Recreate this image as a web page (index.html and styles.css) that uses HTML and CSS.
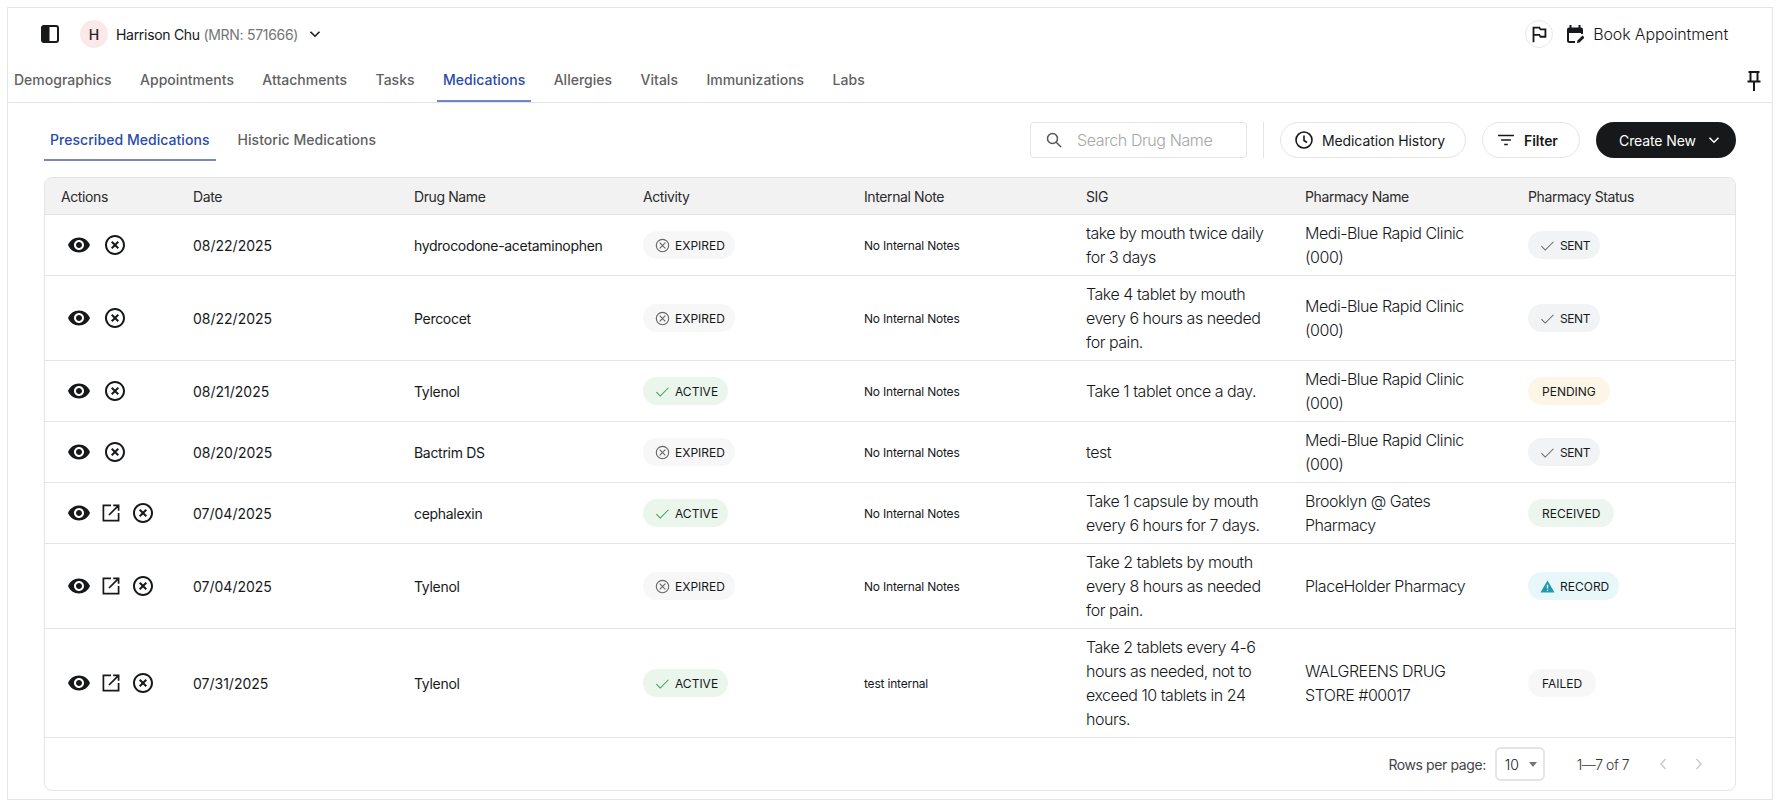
FILE: index.html
```html
<!DOCTYPE html>
<html lang="en">
<head>
<meta charset="utf-8">
<title>Medications</title>
<link rel="stylesheet" href="styles.css">
</head>
<body>
<svg class="defs" width="0" height="0" aria-hidden="true">
  <symbol id="i-eye" viewBox="0 0 24 24"><path d="M12 4.5C7 4.5 2.73 7.61 1 12c1.73 4.39 6 7.5 11 7.5s9.27-3.11 11-7.5c-1.73-4.39-6-7.5-11-7.5zM12 17c-2.76 0-5-2.24-5-5s2.24-5 5-5 5 2.24 5 5-2.24 5-5 5zm0-8c-1.66 0-3 1.34-3 3s1.34 3 3 3 3-1.34 3-3-1.34-3-3-3z"/></symbol>
  <symbol id="i-off" viewBox="0 0 24 24"><path d="M14.59 8 12 10.59 9.41 8 8 9.41 10.59 12 8 14.59 9.41 16 12 13.41 14.59 16 16 14.59 13.41 12 16 9.41 14.59 8zM12 2C6.47 2 2 6.47 2 12s4.47 10 10 10 10-4.47 10-10S17.53 2 12 2zm0 18c-4.41 0-8-3.59-8-8s3.59-8 8-8 8 3.59 8 8-3.59 8-8 8z"/></symbol>
  <symbol id="i-open" viewBox="0 0 24 24"><path d="M12 4.4H4.4v15.2h15.2V12M14.2 4.4h5.4v5.4M19.4 4.6 10 14" fill="none" stroke="#16181a" stroke-width="1.7"/></symbol>
  <symbol id="i-check" viewBox="0 0 16 16"><path d="M1.5 8.6 5.6 12.8 14.4 4" fill="none" stroke="currentColor" stroke-width="1.1"/></symbol>
  <symbol id="i-xc" viewBox="0 0 16 16"><circle cx="8" cy="8" r="6.6" fill="none" stroke="currentColor" stroke-width="1.2"/><path d="M5 5l6 6M11 5l-6 6" fill="none" stroke="currentColor" stroke-width="1.2"/></symbol>
</svg>
<main class="frame">
  <header class="top">
    <div class="top-left">
      <svg class="ic-side" viewBox="0 0 18 18"><rect x="1" y="1" width="16" height="16" rx="2" fill="none" stroke="#16181a" stroke-width="2"/><rect x="1" y="1" width="7.5" height="16" fill="#16181a"/></svg>
      <span class="avatar">H</span>
      <span class="patient">Harrison Chu <span class="mrn">(MRN: 571666)</span></span>
      <svg class="ic-down" viewBox="0 0 12 12"><path d="M1.5 3.8 6 8.2l4.5-4.4" fill="none" stroke="#16181a" stroke-width="1.6"/></svg>
    </div>
    <div class="top-right">
      <span class="flag-btn"><svg viewBox="0 0 24 24"><path d="M14 6l-1-2H5v17h2v-7h5l1 2h7V6h-6zm4 8h-4l-1-2H7V6h5l1 2h5v6z"/></svg></span>
      <svg class="ic-cal" viewBox="0 0 18 20"><path d="M1 5.5a2 2 0 0 1 2-2h12a2 2 0 0 1 2 2V9H1z" fill="#16181a"/><path d="M4.5 1v3M13.5 1v3" stroke="#16181a" stroke-width="2"/><path d="M2 9v7.5a1.5 1.5 0 0 0 1.5 1.5H9M16 9v1" fill="none" stroke="#16181a" stroke-width="2"/><path d="M11 19l.5-2.6 5-5 2 2-5 5z" fill="#16181a"/></svg>
      <span class="book">Book Appointment</span>
    </div>
  </header>
  <nav class="tabs">
    <a class="tab">Demographics</a>
    <a class="tab">Appointments</a>
    <a class="tab">Attachments</a>
    <a class="tab">Tasks</a>
    <a class="tab tab-on">Medications</a>
    <a class="tab">Allergies</a>
    <a class="tab">Vitals</a>
    <a class="tab">Immunizations</a>
    <a class="tab">Labs</a>
    <svg class="ic-pin" viewBox="0 0 14 20"><path d="M1.5 1h11M3.5 1v9M10.5 1v9M0.5 10.5h13M7 10.5V20" fill="none" stroke="#16181a" stroke-width="2"/></svg>
  </nav>
  <section class="content">
    <div class="toolbar">
      <div class="subtabs">
        <a class="subtab subtab-on">Prescribed Medications</a>
        <a class="subtab">Historic Medications</a>
      </div>
      <div class="controls">
        <label class="search">
          <svg class="ic-search" viewBox="0 0 16 16"><circle cx="6.5" cy="6.5" r="5" fill="none" stroke="#555" stroke-width="1.5"/><path d="M10.2 10.2 15 15" stroke="#555" stroke-width="1.5"/></svg>
          <span class="placeholder">Search Drug Name</span>
        </label>
        <span class="divider"></span>
        <button class="pill pill-hist"><svg class="ic-clock" viewBox="0 0 18 18"><circle cx="9" cy="9" r="8" fill="none" stroke="#16181a" stroke-width="1.6"/><path d="M9 4.5V9.5l3 2" fill="none" stroke="#16181a" stroke-width="1.6"/></svg>Medication History</button>
        <button class="pill pill-filter"><svg class="ic-filter" viewBox="0 0 18 12"><path d="M0 1h18M3.5 6h11M7 11h4" stroke="#16181a" stroke-width="1.8"/></svg>Filter</button>
        <button class="create">Create New<svg class="ic-down-w" viewBox="0 0 12 12"><path d="M1.5 3.8 6 8.2l4.5-4.4" fill="none" stroke="#fff" stroke-width="1.6"/></svg></button>
      </div>
    </div>
    <div class="panel">
      <table class="grid">
        <colgroup><col class="c1"><col class="c2"><col class="c3"><col class="c4"><col class="c5"><col class="c6"><col class="c7"><col class="c8"></colgroup>
        <thead><tr><th>Actions</th><th>Date</th><th>Drug Name</th><th>Activity</th><th>Internal Note</th><th>SIG</th><th>Pharmacy Name</th><th>Pharmacy Status</th></tr></thead>
        <tbody>
          <tr>
            <td><div class="acts"><svg class="ai"><use href="#i-eye"/></svg><svg class="ai"><use href="#i-off"/></svg></div></td>
            <td class="date">08/22/2025</td><td class="drug">hydrocodone-acetaminophen</td>
            <td><span class="badge b-exp"><svg class="bi"><use href="#i-xc"/></svg>EXPIRED</span></td>
            <td class="note">No Internal Notes</td>
            <td class="sig">take by mouth twice daily for 3 days</td>
            <td class="sig pharm">Medi-Blue Rapid Clinic (000)</td>
            <td><span class="badge b-sent"><svg class="bi"><use href="#i-check"/></svg>SENT</span></td>
          </tr>
          <tr>
            <td><div class="acts"><svg class="ai"><use href="#i-eye"/></svg><svg class="ai"><use href="#i-off"/></svg></div></td>
            <td class="date">08/22/2025</td><td class="drug">Percocet</td>
            <td><span class="badge b-exp"><svg class="bi"><use href="#i-xc"/></svg>EXPIRED</span></td>
            <td class="note">No Internal Notes</td>
            <td class="sig">Take 4 tablet by mouth every 6 hours as needed for pain.</td>
            <td class="sig pharm">Medi-Blue Rapid Clinic (000)</td>
            <td><span class="badge b-sent"><svg class="bi"><use href="#i-check"/></svg>SENT</span></td>
          </tr>
          <tr>
            <td><div class="acts"><svg class="ai"><use href="#i-eye"/></svg><svg class="ai"><use href="#i-off"/></svg></div></td>
            <td class="date">08/21/2025</td><td class="drug">Tylenol</td>
            <td><span class="badge b-act"><svg class="bi"><use href="#i-check"/></svg>ACTIVE</span></td>
            <td class="note">No Internal Notes</td>
            <td class="sig">Take 1 tablet once a day.</td>
            <td class="sig pharm">Medi-Blue Rapid Clinic (000)</td>
            <td><span class="badge b-pend">PENDING</span></td>
          </tr>
          <tr>
            <td><div class="acts"><svg class="ai"><use href="#i-eye"/></svg><svg class="ai"><use href="#i-off"/></svg></div></td>
            <td class="date">08/20/2025</td><td class="drug">Bactrim DS</td>
            <td><span class="badge b-exp"><svg class="bi"><use href="#i-xc"/></svg>EXPIRED</span></td>
            <td class="note">No Internal Notes</td>
            <td class="sig">test</td>
            <td class="sig pharm">Medi-Blue Rapid Clinic (000)</td>
            <td><span class="badge b-sent"><svg class="bi"><use href="#i-check"/></svg>SENT</span></td>
          </tr>
          <tr>
            <td><div class="acts acts3"><svg class="ai"><use href="#i-eye"/></svg><svg class="ai"><use href="#i-open"/></svg><svg class="ai"><use href="#i-off"/></svg></div></td>
            <td class="date">07/04/2025</td><td class="drug">cephalexin</td>
            <td><span class="badge b-act"><svg class="bi"><use href="#i-check"/></svg>ACTIVE</span></td>
            <td class="note">No Internal Notes</td>
            <td class="sig">Take 1 capsule by mouth every 6 hours for 7 days.</td>
            <td class="sig pharm">Brooklyn @ Gates Pharmacy</td>
            <td><span class="badge b-recv">RECEIVED</span></td>
          </tr>
          <tr>
            <td><div class="acts acts3"><svg class="ai"><use href="#i-eye"/></svg><svg class="ai"><use href="#i-open"/></svg><svg class="ai"><use href="#i-off"/></svg></div></td>
            <td class="date">07/04/2025</td><td class="drug">Tylenol</td>
            <td><span class="badge b-exp"><svg class="bi"><use href="#i-xc"/></svg>EXPIRED</span></td>
            <td class="note">No Internal Notes</td>
            <td class="sig">Take 2 tablets by mouth every 8 hours as needed for pain.</td>
            <td class="sig pharm">PlaceHolder Pharmacy</td>
            <td><span class="badge b-rec"><svg class="bi bi-warn" viewBox="0 0 16 16"><path d="M8 1.5 15.5 14.5H.5z" fill="#1f9bad"/><path d="M8 6v4.2M8 11.4v1.4" stroke="#fff" stroke-width="1.4"/></svg>RECORD</span></td>
          </tr>
          <tr>
            <td><div class="acts acts3"><svg class="ai"><use href="#i-eye"/></svg><svg class="ai"><use href="#i-open"/></svg><svg class="ai"><use href="#i-off"/></svg></div></td>
            <td class="date">07/31/2025</td><td class="drug">Tylenol</td>
            <td><span class="badge b-act"><svg class="bi"><use href="#i-check"/></svg>ACTIVE</span></td>
            <td class="note">test internal</td>
            <td class="sig">Take 2 tablets every 4-6 hours as needed, not to exceed 10 tablets in 24 hours.</td>
            <td class="sig pharm">WALGREENS DRUG STORE #00017</td>
            <td><span class="badge b-fail">FAILED</span></td>
          </tr>
        </tbody>
      </table>
      <footer class="pager">
        <span class="rows-label">Rows per page:</span>
        <span class="select">10<i class="caret"></i></span>
        <span class="range">1—7 of 7</span>
        <svg class="nav-ic" viewBox="0 0 10 14"><path d="M7.5 2 3 7l4.5 5" fill="none" stroke="#c8c8c8" stroke-width="1.4"/></svg>
        <svg class="nav-ic" viewBox="0 0 10 14"><path d="M2.5 2 7 7l-4.5 5" fill="none" stroke="#c8c8c8" stroke-width="1.4"/></svg>
      </footer>
    </div>
  </section>
</main>
</body>
</html>
```
FILE: styles.css
```css
* { box-sizing: border-box; }
html, body { margin: 0; height: 100%; }
body { background: #fff; color: #16181a; font-family: Inter, "Liberation Sans", sans-serif; font-size: 14px; padding: 7px 9px 9px 7px; overflow: hidden; }
.defs { position: absolute; }
.frame { border: 1px solid #e4e4e4; height: 793px; display: flex; flex-direction: column; }
.top { height: 53px; flex: none; display: flex; align-items: center; justify-content: space-between; padding: 0 44px 1px 33px; }
.top-left, .top-right { display: flex; align-items: center; }
.ic-side { width: 18px; height: 18px; }
.avatar { width: 28px; height: 28px; margin-left: 21px; border-radius: 50%; background: #fbe9ea; display: flex; align-items: center; justify-content: center; font-size: 14px; font-weight: 500; color: #2c2224; }
.patient { margin-left: 8px; font-size: 14px; letter-spacing: -0.3px; }
.mrn { color: #757575; }
.ic-down { width: 12px; height: 12px; margin-left: 11px; }
.flag-btn { width: 28px; height: 28px; border: 1px solid #e8e8e8; border-radius: 50%; display: flex; align-items: center; justify-content: center; }
.flag-btn svg { width: 22px; height: 22px; fill: #16181a; }
.ic-cal { width: 18px; height: 20px; margin-left: 13px; }
.book { margin-left: 9px; font-size: 16px; font-weight: 300; letter-spacing: -0.15px; }
.tabs { height: 42px; flex: none; display: flex; align-items: stretch; gap: 16.4px; border-bottom: 1px solid #e4e4e4; position: relative; }
.tab { padding: 0 6px; line-height: 38px; font-size: 14px; font-weight: 500; color: #616161; letter-spacing: 0.02px; }
.tab-on { color: #2a4bab; border-bottom: 2px solid #7186c8; height: 41px; }
.ic-pin { position: absolute; right: 11px; top: 10px; width: 14px; height: 20px; }
.content { flex: 1; padding: 0 36px; display: flex; flex-direction: column; }
.toolbar { display: flex; justify-content: space-between; padding-top: 19px; height: 74px; flex: none; }
.subtabs { display: flex; gap: 16px; height: 39px; }
.subtab { padding: 0 6px; line-height: 36px; font-size: 14px; font-weight: 500; color: #616161; letter-spacing: 0.05px; }
.subtab-on { color: #2a4bab; border-bottom: 2px solid #7a88c0; }
.controls { display: flex; align-items: flex-start; }
.search { width: 217px; height: 36px; border: 1px solid #e4e4e4; border-radius: 4px; display: flex; align-items: center; padding-left: 15px; }
.ic-search { width: 16px; height: 16px; }
.placeholder { margin-left: 15px; font-size: 16px; font-weight: 300; color: #a6a6a6; letter-spacing: -0.4px; }
.divider { width: 1px; height: 36px; background: #e4e4e4; margin: 0 16px; }
.pill { height: 36px; border: 1px solid #e4e4e4; border-radius: 18px; background: #fff; display: flex; align-items: center; font: inherit; color: #16181a; padding: 0; letter-spacing: -0.1px; }
.pill-hist { width: 186px; padding-left: 14px; }
.pill-filter { width: 98px; margin-left: 16px; padding-left: 15px; font-weight: 600; }
.ic-clock { width: 18px; height: 18px; margin-right: 9px; }
.ic-filter { width: 16px; height: 12px; margin-right: 10px; }
.create { width: 140px; height: 36px; margin-left: 16px; border: 0; border-radius: 18px; background: #16181a; color: #fff; font: inherit; letter-spacing: -0.1px; display: flex; align-items: center; padding-left: 23px; }
.ic-down-w { width: 12px; height: 12px; margin-left: 12px; }
.panel { border: 1px solid #e4e4e4; border-radius: 8px; overflow: hidden; }
.grid { width: 100%; border-collapse: separate; border-spacing: 0; table-layout: fixed; }
.c1 { width: 132px; } .c2 { width: 221px; } .c3 { width: 229px; } .c4 { width: 221px; }
.c5 { width: 222px; } .c6 { width: 219px; } .c7 { width: 223px; } .c8 { width: 223px; }
th { height: 37px; background: #f2f2f2; font-weight: 400; text-align: left; padding: 0 16px; border-bottom: 1px solid #e4e4e4; color: #2b2b2b; letter-spacing: -0.4px; }
td { padding: 6px 16px; border-bottom: 1px solid #e4e4e4; height: 61px; }
.drug { letter-spacing: -0.3px; }
.note { font-size: 12px; letter-spacing: -0.2px; }
.sig { font-size: 16px; font-weight: 300; line-height: 24px; padding-right: 12px; letter-spacing: -0.47px; }
.pharm { padding-right: 28px; }
.acts { display: flex; gap: 12px; margin-left: 6px; }
.acts3 { gap: 8px; }
.ai { width: 24px; height: 24px; fill: #16181a; }
.badge { display: inline-flex; align-items: center; height: 28px; border-radius: 14px; padding: 0 10px 0 12px; font-size: 12px; gap: 5px; vertical-align: middle; }
.bi { width: 15px; height: 15px; color: #666; }
.b-exp { background: #f7f7f7; }
.b-act { background: #eaf6ec; }
.b-act .bi { color: #3d9b4f; }
.b-sent { background: #f1f3f5; letter-spacing: -0.4px; }
.b-pend { background: #fdf6e7; padding: 0 14px; }
.b-recv { background: #edf6ee; padding: 0 14px; }
.b-rec { background: #e8f8fa; }
.b-fail { background: #f7f7f7; padding: 0 14px; }
.pager { height: 52px; display: flex; align-items: center; justify-content: flex-end; padding-right: 31px; }
.rows-label { color: #444; letter-spacing: -0.4px; }
.select { width: 50px; height: 34px; margin-left: 9px; border: 2px solid #e4e4e4; border-radius: 6px; display: flex; align-items: center; padding-left: 8px; position: relative; font-weight: 300; }
.caret { position: absolute; right: 6px; top: 13px; border: 4.5px solid transparent; border-top: 5px solid #777; border-bottom: 0; }
.range { margin-left: 32px; margin-right: 29px; font-weight: 300; color: #333; letter-spacing: -0.5px; }
.nav-ic { width: 10px; height: 14px; }
.nav-ic + .nav-ic { margin-left: 26px; }
```
